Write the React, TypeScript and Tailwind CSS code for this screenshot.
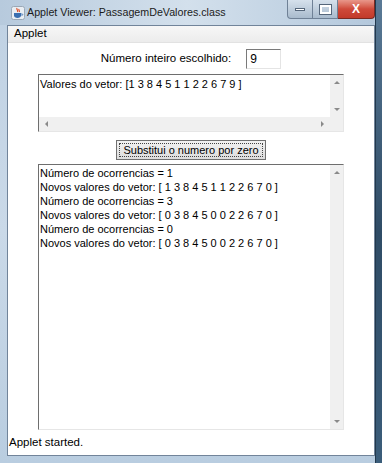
import React from "react";

const vetorInicial = "Valores do vetor: [1 3 8 4 5 1 1 2 2 6 7 9 ]";

const saida = [
  "Número de ocorrencias = 1",
  "Novos valores do vetor: [ 1 3 8 4 5 1 1 2 2 6 7 0 ]",
  "Número de ocorrencias = 3",
  "Novos valores do vetor: [ 0 3 8 4 5 0 0 2 2 6 7 0 ]",
  "Número de ocorrencias = 0",
  "Novos valores do vetor: [ 0 3 8 4 5 0 0 2 2 6 7 0 ]",
];

const Arrow: React.FC<{ dir: "up" | "down" | "left" | "right" }> = ({ dir }) => {
  const pts = {
    up: "0,4 3,1 6,4",
    down: "0,1 3,4 6,1",
    left: "4,0 1,3 4,6",
    right: "1,0 4,3 1,6",
  }[dir];
  const vert = dir === "up" || dir === "down";
  return (
    <svg width={vert ? 6 : 5} height={vert ? 5 : 6} viewBox={vert ? "0 0 6 5" : "0 0 5 6"}>
      <polygon points={pts} fill="#8a8a8a" />
    </svg>
  );
};

const JavaIcon = () => (
  <svg width="14" height="14" viewBox="0 0 14 14">
    <rect x="0.5" y="0.5" width="13" height="13" rx="2" fill="#e9eef3" stroke="#9aa8b6" />
    <path d="M6 2c-1 1.5 1.5 2 0.5 4M8 3c-.8 1 1 1.5.3 3" stroke="#e0512a" strokeWidth="1.2" fill="none" />
    <path d="M3 7h7v2.5c0 1.5-1.5 2.5-3.5 2.5S3 11 3 9.5z" fill="#3a6fb0" />
    <path d="M10 8h1.2c.8 0 .8 1.5-.6 1.6" stroke="#3a6fb0" strokeWidth="0.9" fill="none" />
  </svg>
);

export default function App() {
  return (
    <div className="w-[382px] h-[463px] flex overflow-hidden font-['Liberation_Sans',Arial,sans-serif] text-black">
      <div className="w-[375px] h-full flex flex-col bg-gradient-to-b from-[#bfd1e3] via-[#cad9e8] to-[#b9cde0]">
        {/* title bar */}
        <div className="relative h-[25px] shrink-0 flex items-center pl-[11px] bg-gradient-to-r from-[#b7cadd] via-[#d3e0ec] to-[#b4c8dc]">
          <JavaIcon />
          <span className="ml-[2px] text-[10.7px] text-[#1b1b1b] leading-none">
            Applet Viewer: PassagemDeValores.class
          </span>
          <div className="absolute right-0 top-0 flex h-[19px]">
            <div className="w-[26px] h-full border border-[#6f8196] border-t-0 rounded-bl-[4px] bg-gradient-to-b from-[#d6e1ec] to-[#a9bbcd] flex items-center justify-center">
              <div className="w-[10px] h-[3px] bg-white border border-[#55667a]" />
            </div>
            <div className="w-[25px] h-full border-b border-r border-[#6f8196] bg-gradient-to-b from-[#d6e1ec] to-[#a9bbcd] flex items-center justify-center">
              <div className="w-[11px] h-[9px] border-2 border-white outline outline-1 outline-[#55667a]" />
            </div>
            <div className="w-[37px] h-full border-b border-r border-[#7a2a22] rounded-br-[4px] bg-gradient-to-b from-[#e8978a] via-[#cf4a3a] to-[#c23a2a] flex items-center justify-center">
              <span className="text-white font-bold text-[12px] leading-none">X</span>
            </div>
          </div>
        </div>

        {/* inner window */}
        <div className="flex-1 ml-[7px] mb-[7px] flex flex-col border border-[#71849a] bg-white">
          {/* menu bar */}
          <div className="h-[17px] shrink-0 flex items-center pl-[6px] bg-gradient-to-b from-[#f7f7f7] to-[#ececec] border-b border-[#e2e2e2]">
            <span className="text-[11.5px] leading-none">Applet</span>
          </div>

          {/* applet panel */}
          <div className="flex-1 flex flex-col items-center pt-[6px] text-[11px]">
            <div className="flex items-center gap-[15px]">
              <span className="leading-none text-[11.5px]">Número inteiro escolhido:</span>
              <div className="w-[35px] h-[20px] border-t border-l border-[#7a7a7a] border-b border-r border-b-[#e4e4e4] border-r-[#e4e4e4] pl-[3px] flex items-center">
                <span className="text-[12px] leading-none">9</span>
              </div>
            </div>

            {/* top text area */}
            <div className="mt-[5px] w-[306px] h-[58px] border-t border-l border-[#6e6e6e] border-b border-r border-b-[#e6e6e6] border-r-[#e6e6e6] grid grid-cols-[1fr_13px] grid-rows-[1fr_14px]">
              <div className="pl-[1px] pt-[2px] leading-[14px] whitespace-pre">{vetorInicial}</div>
              <div className="bg-[#f0f0f0] flex flex-col items-center justify-between py-[5px]">
                <Arrow dir="up" />
                <Arrow dir="down" />
              </div>
              <div className="bg-[#f0f0f0] flex items-center justify-between px-[5px]">
                <Arrow dir="left" />
                <Arrow dir="right" />
              </div>
              <div className="bg-[#f0f0f0]" />
            </div>

            {/* button */}
            <button className="mt-[8px] w-[150px] h-[20px] border border-[#707070] bg-gradient-to-b from-[#f2f2f2] to-[#dcdcdc] p-[2px]">
              <div className="w-full h-full border border-dotted border-[#444] flex items-center justify-center">
                <span className="leading-none text-[11px]">Substitui o numero por zero</span>
              </div>
            </button>

            {/* bottom text area */}
            <div className="mt-[4px] w-[306px] h-[266px] border-t border-l border-[#6e6e6e] border-b border-r border-b-[#e6e6e6] border-r-[#e6e6e6] flex">
              <div className="flex-1 pl-[1px] pt-[2px] leading-[13.9px]">
                {saida.map((linha, i) => (
                  <div key={i} className="whitespace-pre">{linha}</div>
                ))}
              </div>
              <div className="w-[13px] bg-[#f0f0f0] flex flex-col items-center justify-between py-[5px]">
                <Arrow dir="up" />
                <Arrow dir="down" />
              </div>
            </div>
          </div>

          {/* status */}
          <div className="h-[20px] shrink-0 flex items-center pl-[1px] pb-[4px] text-[11.5px]">
            <span className="leading-none">Applet started.</span>
          </div>
        </div>
      </div>
      <div className="w-[7px] h-full bg-gradient-to-b from-[#5a7a96] via-[#2f4c66] to-[#3b5d7a] border-l border-[#22384c]" />
    </div>
  );
}
